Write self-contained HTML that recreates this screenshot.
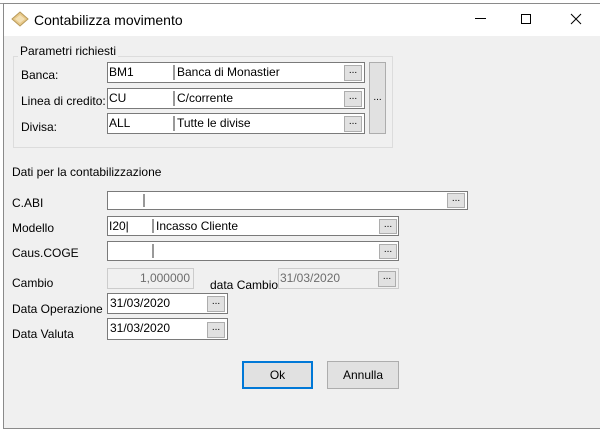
<!DOCTYPE html>
<html><head><meta charset="utf-8"><style>
*{margin:0;padding:0;box-sizing:border-box}
body{width:600px;height:432px;background:#fff;font-family:"Liberation Sans",sans-serif;font-size:12px;color:#000;position:relative;overflow:hidden}
.a{position:absolute}
.win{left:3px;top:3px;width:597px;height:426px;border:1px solid #8a8a8a;border-right:none;background:#f0f0f0}
.title{left:4px;top:4px;width:596px;height:32px;background:#fff}
.in{position:absolute;background:#fff;border:1px solid #7a7a7a}
.dis{background:#f0f0f0;border-color:#ccc;color:#6d6d6d}
.sep{position:absolute;top:2px;bottom:2px;width:2px;background:#999}
.btn{position:absolute;background:#e1e1e1;border:1px solid #adadad;font-size:10px;text-align:center;line-height:10px}
.t{position:absolute;white-space:nowrap}
</style></head><body>
<div class="a" style="left:0;top:0;width:600px;height:4px;background:#fff;border-bottom:1px solid #999"></div>
<div class="a win"></div>
<div class="a title"></div>
<svg class="a" style="left:11px;top:11px" width="18" height="16"><polygon points="9,1 17,8 9,15 1,8" fill="#e8c98a" stroke="#b89a5a"/><polygon points="9,4 14,8 9,12 4,8" fill="#f3e0b5"/></svg>
<div class="t" style="left:34px;top:12px;font-size:14px">Contabilizza movimento</div>
<div class="a" style="left:475px;top:18px;width:11px;height:1px;background:#000"></div>
<div class="a" style="left:521px;top:14px;width:10px;height:10px;border:1px solid #000"></div>
<svg class="a" style="left:570px;top:13px" width="12" height="12"><path d="M1 1L11 11M11 1L1 11" stroke="#000" stroke-width="1"/></svg>

<div class="a" style="left:13px;top:56px;width:380px;height:92px;border:1px solid #dcdcdc"></div>
<div class="t" style="left:18px;top:44px;background:#f0f0f0;padding:0 2px">Parametri richiesti</div>

<div class="t" style="left:21px;top:68px">Banca:</div>
<div class="t" style="left:21px;top:94px">Linea di credito:</div>
<div class="t" style="left:21px;top:120px">Divisa:</div>

<div class="in" style="left:107px;top:62px;width:258px;height:21px"><div class="t" style="left:1px;top:2px">BM1</div><div class="sep" style="left:65px"></div><div class="t" style="left:69px;top:2px">Banca di Monastier</div><div class="btn" style="left:236px;top:2px;width:18px;height:16px">...</div></div>
<div class="in" style="left:107px;top:88px;width:258px;height:21px"><div class="t" style="left:1px;top:2px">CU</div><div class="sep" style="left:65px"></div><div class="t" style="left:69px;top:2px">C/corrente</div><div class="btn" style="left:236px;top:2px;width:18px;height:16px">...</div></div>
<div class="in" style="left:107px;top:113px;width:258px;height:21px"><div class="t" style="left:1px;top:2px">ALL</div><div class="sep" style="left:65px"></div><div class="t" style="left:69px;top:2px">Tutte le divise</div><div class="btn" style="left:236px;top:2px;width:18px;height:16px">...</div></div>
<div class="btn" style="left:369px;top:62px;width:17px;height:72px;line-height:70px">...</div>

<div class="t" style="left:12px;top:165px">Dati per la contabilizzazione</div>

<div class="t" style="left:12px;top:196px">C.ABI</div>
<div class="t" style="left:12px;top:221px">Modello</div>
<div class="t" style="left:12px;top:246px">Caus.COGE</div>
<div class="t" style="left:12px;top:276px">Cambio</div>
<div class="t" style="left:12px;top:302px">Data Operazione</div>
<div class="t" style="left:12px;top:327px">Data Valuta</div>

<div class="in" style="left:107px;top:191px;width:361px;height:19px"><div class="sep" style="left:35px"></div><div class="btn" style="left:339px;top:1px;width:18px;height:15px">...</div></div>
<div class="in" style="left:107px;top:216px;width:292px;height:20px"><div class="t" style="left:1px;top:2px">I20|</div><div class="sep" style="left:44px"></div><div class="t" style="left:48px;top:2px">Incasso Cliente</div><div class="btn" style="left:271px;top:2px;width:18px;height:15px">...</div></div>
<div class="in" style="left:107px;top:241px;width:292px;height:20px"><div class="sep" style="left:44px"></div><div class="btn" style="left:271px;top:2px;width:18px;height:15px">...</div></div>
<div class="in dis" style="left:107px;top:268px;width:87px;height:21px"><div class="t" style="right:3px;top:2px">1,000000</div></div>
<div class="t" style="left:210px;top:278px">data Cambio</div>
<div class="in dis" style="left:278px;top:268px;width:121px;height:21px"><div class="t" style="left:1px;top:2px">31/03/2020</div><div class="btn" style="left:99px;top:2px;width:18px;height:16px;color:#000">...</div></div>
<div class="in" style="left:107px;top:293px;width:121px;height:21px"><div class="t" style="left:2px;top:2px">31/03/2020</div><div class="btn" style="left:99px;top:2px;width:18px;height:16px">...</div></div>
<div class="in" style="left:107px;top:318px;width:121px;height:22px"><div class="t" style="left:2px;top:2px">31/03/2020</div><div class="btn" style="left:99px;top:3px;width:18px;height:16px">...</div></div>

<div class="a" style="left:242px;top:361px;width:71px;height:28px;background:#e1e1e1;border:2px solid #0078d7;text-align:center;line-height:24px">Ok</div>
<div class="a" style="left:327px;top:361px;width:72px;height:28px;background:#e1e1e1;border:1px solid #adadad;text-align:center;line-height:26px">Annulla</div>
</body></html>
